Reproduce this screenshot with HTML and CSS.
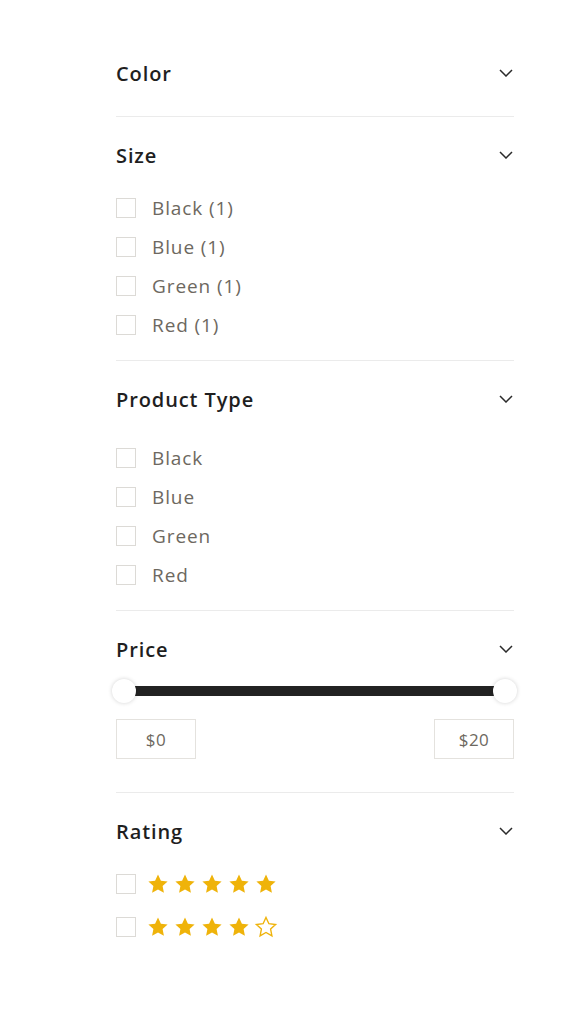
FILE: index.html
```html
<!DOCTYPE html>
<html lang="en">
<head>
  <meta charset="UTF-8" />
  <meta name="viewport" content="width=device-width, initial-scale=1.0"/>
  <title>Filters</title>
  <link rel="stylesheet" href="styles.css">
</head>
<body>

  <!-- Filter sidebar -->
  <div class="filters">

    <div class="filter filter--closed">
      <div class="filter-head">
        <span>Color</span>
        <svg class="chevron" viewBox="0 0 14 8"><path d="M1 1l6 6 6-6"/></svg>
      </div>
    </div>

    <div class="filter">
      <div class="filter-head">
        <span>Size</span>
        <svg class="chevron" viewBox="0 0 14 8"><path d="M1 1l6 6 6-6"/></svg>
      </div>
      <ul class="options">
        <li><span class="box"></span>Black (1)</li>
        <li><span class="box"></span>Blue (1)</li>
        <li><span class="box"></span>Green (1)</li>
        <li><span class="box"></span>Red (1)</li>
      </ul>
    </div>

    <div class="filter">
      <div class="filter-head">
        <span>Product Type</span>
        <svg class="chevron" viewBox="0 0 14 8"><path d="M1 1l6 6 6-6"/></svg>
      </div>
      <ul class="options options--spaced">
        <li><span class="box"></span>Black</li>
        <li><span class="box"></span>Blue</li>
        <li><span class="box"></span>Green</li>
        <li><span class="box"></span>Red</li>
      </ul>
    </div>

    <div class="filter filter--price">
      <div class="filter-head">
        <span>Price</span>
        <svg class="chevron" viewBox="0 0 14 8"><path d="M1 1l6 6 6-6"/></svg>
      </div>
      <div class="slider">
        <span class="thumb"></span>
        <span class="track"></span>
        <span class="thumb"></span>
      </div>
      <div class="price-inputs">
        <div class="price-box">$0</div>
        <div class="price-box">$20</div>
      </div>
    </div>

    <div class="filter filter--last">
      <div class="filter-head">
        <span>Rating</span>
        <svg class="chevron" viewBox="0 0 14 8"><path d="M1 1l6 6 6-6"/></svg>
      </div>
      <ul class="options options--rating">
        <li>
          <span class="box"></span>
          <span class="stars">
            <svg viewBox="0 0 24 24"><path class="on" d="M12 2.5l2.9 6.2 6.7.8-5 4.6 1.3 6.7L12 17.5l-5.9 3.3 1.3-6.7-5-4.6 6.7-.8z"/></svg>
            <svg viewBox="0 0 24 24"><path class="on" d="M12 2.5l2.9 6.2 6.7.8-5 4.6 1.3 6.7L12 17.5l-5.9 3.3 1.3-6.7-5-4.6 6.7-.8z"/></svg>
            <svg viewBox="0 0 24 24"><path class="on" d="M12 2.5l2.9 6.2 6.7.8-5 4.6 1.3 6.7L12 17.5l-5.9 3.3 1.3-6.7-5-4.6 6.7-.8z"/></svg>
            <svg viewBox="0 0 24 24"><path class="on" d="M12 2.5l2.9 6.2 6.7.8-5 4.6 1.3 6.7L12 17.5l-5.9 3.3 1.3-6.7-5-4.6 6.7-.8z"/></svg>
            <svg viewBox="0 0 24 24"><path class="on" d="M12 2.5l2.9 6.2 6.7.8-5 4.6 1.3 6.7L12 17.5l-5.9 3.3 1.3-6.7-5-4.6 6.7-.8z"/></svg>
          </span>
        </li>
        <li>
          <span class="box"></span>
          <span class="stars">
            <svg viewBox="0 0 24 24"><path class="on" d="M12 2.5l2.9 6.2 6.7.8-5 4.6 1.3 6.7L12 17.5l-5.9 3.3 1.3-6.7-5-4.6 6.7-.8z"/></svg>
            <svg viewBox="0 0 24 24"><path class="on" d="M12 2.5l2.9 6.2 6.7.8-5 4.6 1.3 6.7L12 17.5l-5.9 3.3 1.3-6.7-5-4.6 6.7-.8z"/></svg>
            <svg viewBox="0 0 24 24"><path class="on" d="M12 2.5l2.9 6.2 6.7.8-5 4.6 1.3 6.7L12 17.5l-5.9 3.3 1.3-6.7-5-4.6 6.7-.8z"/></svg>
            <svg viewBox="0 0 24 24"><path class="on" d="M12 2.5l2.9 6.2 6.7.8-5 4.6 1.3 6.7L12 17.5l-5.9 3.3 1.3-6.7-5-4.6 6.7-.8z"/></svg>
            <svg viewBox="0 0 24 24"><path class="off" d="M12 2.5l2.9 6.2 6.7.8-5 4.6 1.3 6.7L12 17.5l-5.9 3.3 1.3-6.7-5-4.6 6.7-.8z"/></svg>
          </span>
        </li>
      </ul>
    </div>

  </div>

</body>
</html>
```

FILE: styles.css
```css
body, html {
  margin: 0;
  padding: 0;
  background: #fff;
}

body {
  font-family: "Open Sans", Lato, sans-serif;
  color: #222;
}

.filters {
  width: 398px;
  margin: 0 0 0 116px;
  padding-top: 35px;
}

.filter {
  padding: 26px 0 23px;
  border-top: 1px solid #ebebeb;
}

.filter:first-child {
  border-top: none;
}

.filter--closed {
  padding-bottom: 31px;
}

.filter--price {
  padding-bottom: 33px;
}

.filter-head {
  display: flex;
  justify-content: space-between;
  align-items: center;
  height: 24px;
  font-size: 20px;
  font-weight: 600;
  letter-spacing: 0.9px;
  color: #1f1f1f;
}

.chevron {
  width: 14px;
  height: 8px;
  margin-right: 1px;
  fill: none;
  stroke: #2a2a2a;
  stroke-width: 1.5;
}

.options {
  list-style: none;
  margin: 29px 0 0;
  padding: 0;
  display: flex;
  flex-direction: column;
  gap: 15px;
}

.options--spaced {
  margin-top: 35px;
}

.options--rating {
  gap: 19px;
}

.options li {
  display: flex;
  align-items: center;
  height: 24px;
  font-size: 19px;
  letter-spacing: 0.9px;
  color: #6d6860;
}

.box {
  width: 18px;
  height: 18px;
  border: 1px solid #dcdad6;
  margin-right: 16px;
  flex-shrink: 0;
}

.options--rating .box {
  margin-right: 10px;
}

.stars {
  display: flex;
  gap: 3px;
}

.stars svg {
  width: 24px;
  height: 24px;
}

.stars .on {
  fill: #efb30a;
}

.stars .off {
  fill: none;
  stroke: #efb30a;
  stroke-width: 1.4;
}

.slider {
  display: flex;
  align-items: center;
  margin-top: 18px;
  height: 24px;
  margin-left: -4px;
  margin-right: -3px;
}

.track {
  flex: 1;
  height: 10px;
  background: #222;
  margin: 0 -2px;
}

.thumb {
  width: 24px;
  height: 24px;
  border-radius: 50%;
  background: #fff;
  box-shadow: 0 0 4px rgba(0, 0, 0, 0.18);
  position: relative;
  z-index: 1;
}

.price-inputs {
  display: flex;
  justify-content: space-between;
  margin-top: 16px;
}

.price-box {
  width: 78px;
  height: 38px;
  border: 1px solid #e4e2de;
  display: flex;
  align-items: center;
  justify-content: center;
  font-size: 17px;
  letter-spacing: 0.5px;
  color: #6d6860;
}
```
